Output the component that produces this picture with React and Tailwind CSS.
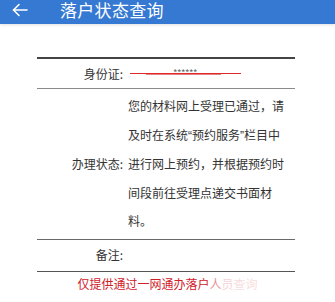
import React from "react";

const font = { fontFamily: '"Noto Sans CJK SC", "Liberation Sans", sans-serif' };
const latin = { fontFamily: '"Liberation Sans", sans-serif' };

const BackArrow = () => (
  <svg width="16" height="14" viewBox="0 0 16 14" fill="none" stroke="white" strokeWidth="1.6" strokeLinecap="round" strokeLinejoin="round">
    <path d="M15 7H1.5" />
    <path d="M7 1.5L1.5 7L7 12.5" />
  </svg>
);

const App = () => {
  const notice = "仅提供通过一网通办落户";
  const faded = [
    { ch: "人", o: "opacity-50" },
    { ch: "员", o: "opacity-20" },
    { ch: "查", o: "opacity-15" },
    { ch: "询", o: "opacity-15" },
  ];

  return (
    <div className="w-[335px] h-[302px] bg-white overflow-hidden" style={font}>
      {/* Header */}
      <div className="h-[24px] bg-[#3679d2] flex items-center shadow-[0_1px_3px_rgba(0,0,0,0.12)]">
        <div className="w-[60px] pl-[12px] flex items-center -mt-[5px]">
          <BackArrow />
        </div>
        <h1 className="text-white text-[17px] leading-[20px] -mt-[4px] tracking-[0.3px]">落户状态查询</h1>
      </div>

      {/* Table */}
      <div className="ml-[37px] w-[258px] mt-[33px] text-[12px] text-[#333]">
        <div className="border-t-2 border-[#444] flex items-center h-[32px] border-b border-b-[#8a8a8a]">
          <div className="w-[86px] shrink-0 text-right">身份证:</div>
          <div className="relative ml-[7px] w-[111px] h-[20px] flex items-center justify-center">
            <div className="absolute left-0 right-0 top-[9px] h-px bg-[#e02a2a]" />
            <div className="absolute left-[16px] right-[20px] top-[10px] h-px bg-[#e88080]" />
            <span className="relative text-[#555] text-[9px] tracking-[0.5px] -mt-[2px]" style={latin}>******</span>
          </div>
        </div>

        <div className="flex items-center border-b border-[#6a6a6a] pt-[3px] pb-[3px]">
          <div className="w-[86px] text-right shrink-0">办理状态:</div>
          <div className="ml-[5px] w-[160px] leading-[28.5px]">
            您的材料网上受理已通过，请及时在系统<span style={latin}>“</span>预约服务<span style={latin}>”</span>栏目中进行网上预约，并根据预约时间段前往受理点递交书面材料。
          </div>
        </div>

        <div className="flex items-center h-[32px] border-b border-[#555]">
          <div className="w-[86px] text-right">备注:</div>
        </div>
      </div>

      {/* Notice */}
      <p className="text-center text-[12px] text-[#d0202a] mt-[4px] leading-[16px]">
        {notice}
        {faded.map((f) => (
          <span key={f.ch} className={f.o}>{f.ch}</span>
        ))}
      </p>
    </div>
  );
};

export default App;
